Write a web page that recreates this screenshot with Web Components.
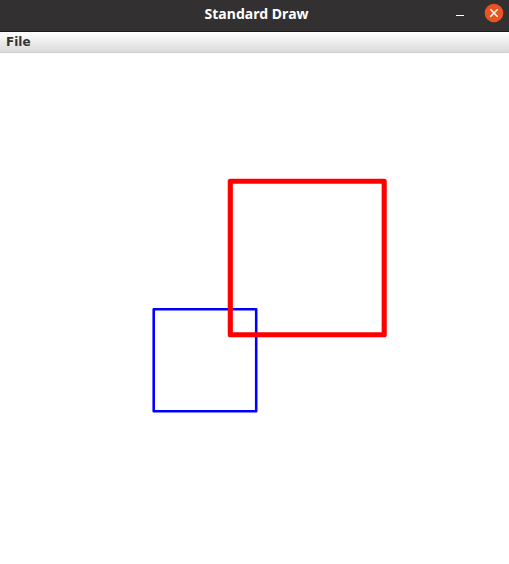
<!DOCTYPE html>
<html lang="en">
<head>
<meta charset="utf-8">
<title>Standard Draw</title>
<style>
html, body { margin: 0; height: 100%; overflow: hidden; background: #fff; }
</style>
</head>
<body>
<draw-window>
  <title-bar slot="title">Standard Draw</title-bar>
  <menu-bar slot="menu"><menu-item>File</menu-item></menu-bar>
  <draw-canvas></draw-canvas>
</draw-window>
<script>
function define(name, markup) {
  customElements.define(name, class extends HTMLElement {
    constructor() {
      super();
      this.attachShadow({ mode: 'open' }).innerHTML = markup;
    }
  });
}

define('draw-window', `
  <style>
    :host { display: flex; flex-direction: column; width: 509px; height: 564px; background: #fff; }
  </style>
  <slot name="title"></slot><slot name="menu"></slot><slot></slot>`);

define('title-bar', `
  <style>
    :host { display: grid; grid-template-columns: 1fr auto 1fr; box-sizing: border-box; height: 32px; flex: none;
      padding-left: 5px; background: #333031; border-bottom: 1px solid #1d1a1b; color: #fff;
      font: 700 14px/28px "Noto Sans", sans-serif; letter-spacing: .04px; }
    .name { grid-column: 2; width: 105px; white-space: nowrap; }
    .controls { display: flex; justify-content: flex-end; }
    svg { display: block; }
  </style>
  <span class="name"><slot></slot></span>
  <span class="controls">
    <svg width="60" height="28" viewBox="449 0 60 28">
      <path d="M456 15.5h8" stroke="#fff"/>
      <circle cx="494" cy="13" r="9.3" fill="#e95420"/>
      <path d="M490.3 9.3l7.4 7.4M497.7 9.3l-7.4 7.4" stroke="#fff" stroke-width="1.5"/>
    </svg>
  </span>`);

define('menu-bar', `
  <style>
    :host { display: flex; box-sizing: border-box; height: 21px; flex: none; padding-left: 6px;
      background: linear-gradient(#fff, #dadada); border-bottom: 1px solid #ccc; }
  </style>
  <slot></slot>`);

define('menu-item', `
  <style>
    :host { display: block; color: #333; font: 700 12px/20px "DejaVu Sans", sans-serif; }
  </style>
  <slot></slot>`);

define('draw-canvas', `
  <style>
    :host { display: block; flex: 1; min-height: 0; }
    svg { display: block; }
  </style>
  <svg width="509" height="511" viewBox="0 53 509 511" fill="none" stroke-linejoin="round">
    <rect x="153.7" y="309.2" width="102.5" height="102" stroke="#00f" stroke-width="2.56"/>
    <rect x="230.3" y="181.3" width="153.9" height="153.4" stroke="#f00" stroke-width="5.12"/>
  </svg>`);
</script>
</body>
</html>
